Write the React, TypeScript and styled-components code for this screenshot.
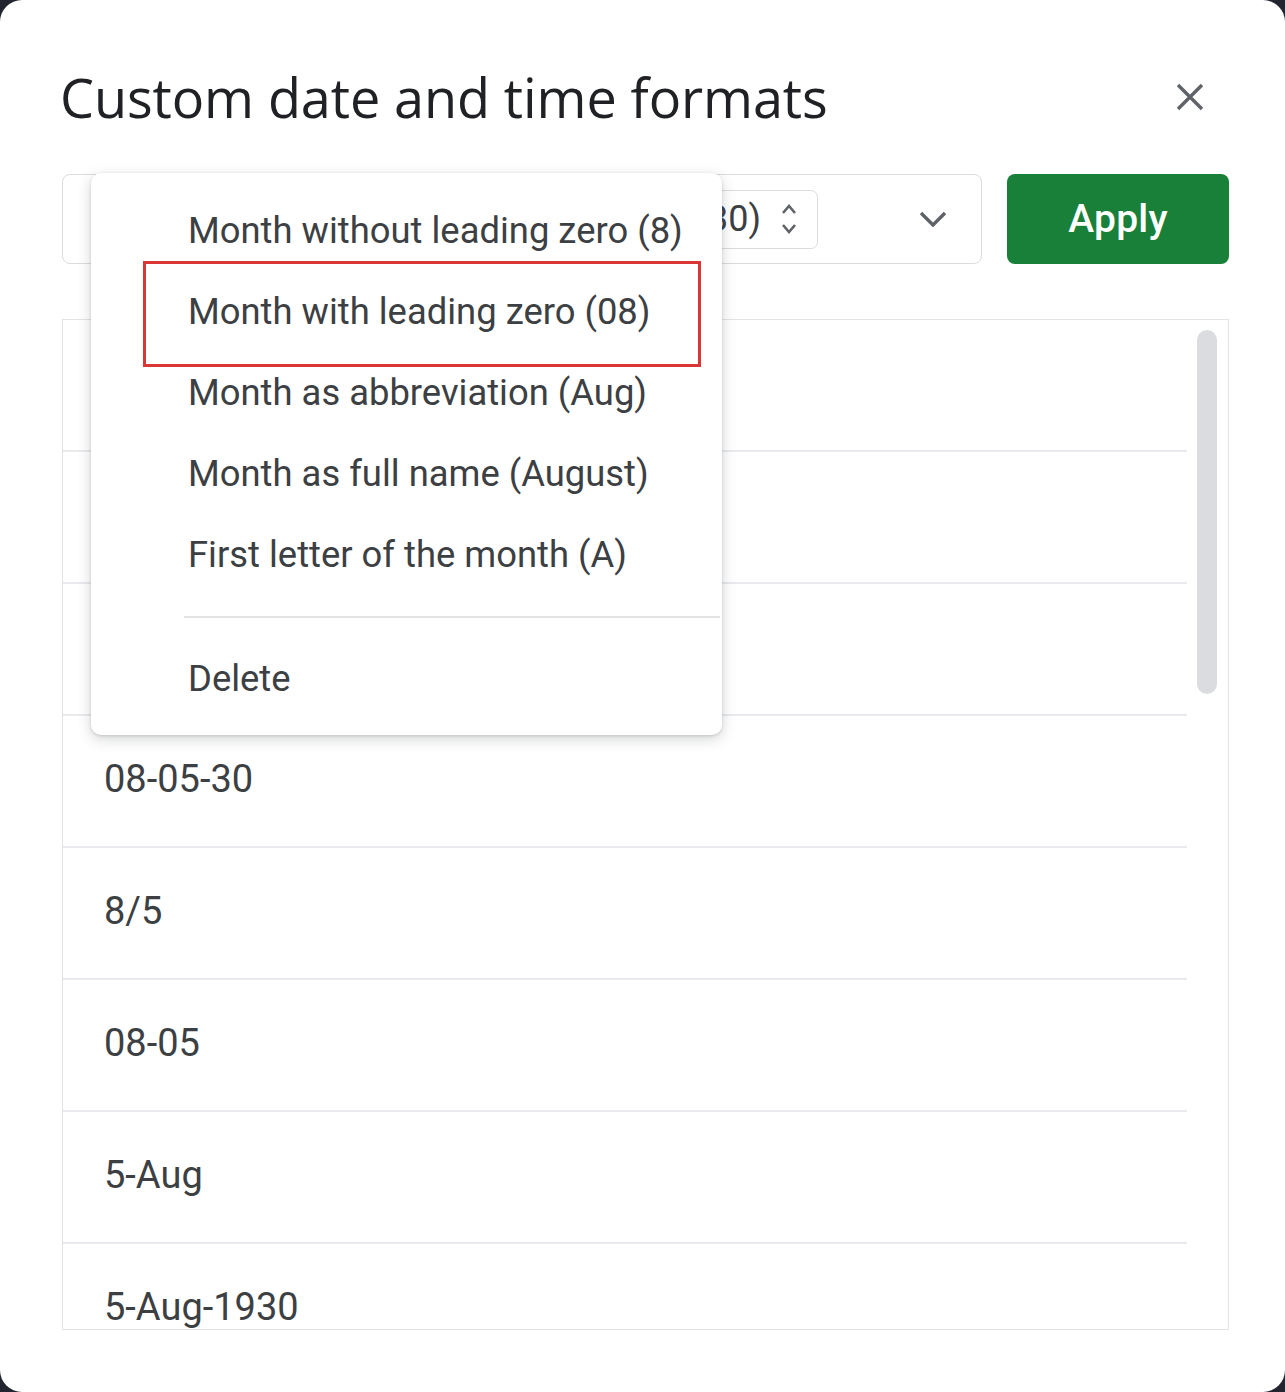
import React from "react";
import styled, { createGlobalStyle } from "styled-components";

const GlobalStyle = createGlobalStyle`
  html, body {
    margin: 0;
    padding: 0;
    background: #22252f;
  }
  * {
    box-sizing: border-box;
  }
`;

const Dialog = styled.div`
  position: relative;
  width: 1285px;
  height: 1392px;
  background: #ffffff;
  border-radius: 22px;
  padding: 57px 56px 0 62px;
  overflow: hidden;
  font-family: Roboto, "Liberation Sans", sans-serif;
`;

const Header = styled.div`
  display: flex;
  align-items: center;
  justify-content: space-between;
  height: 80px;
  margin-bottom: 37px;
`;

const Title = styled.h1`
  margin: 0 0 0 -2px;
  font-family: "Open Sans", "Liberation Sans", sans-serif;
  font-size: 54px;
  font-weight: 400;
  line-height: 80px;
  color: #202124;
  letter-spacing: -0.1px;
`;

const CloseButton = styled.button`
  display: flex;
  align-items: center;
  justify-content: center;
  width: 48px;
  height: 48px;
  margin-right: 15px;
  padding: 0;
  border: none;
  background: none;
`;

const Toolbar = styled.div`
  display: flex;
  gap: 25px;
  height: 90px;
`;

const FormatInput = styled.div`
  flex: 1;
  display: flex;
  align-items: center;
  padding: 0 34px 0 16px;
  border: 1.5px solid #dadce0;
  border-radius: 8px;
`;

const Chip = styled.div`
  display: flex;
  align-items: center;
  gap: 20px;
  height: 59px;
  margin-left: auto;
  margin-right: 101px;
  padding: 0 20px 0 16px;
  border: 1.5px solid #dadce0;
  border-radius: 7px;
  font-size: 36px;
  color: #3c4043;
`;

const ApplyButton = styled.button`
  width: 222px;
  border: none;
  border-radius: 8px;
  background: #188038;
  color: #ffffff;
  font-family: Roboto, "Liberation Sans", sans-serif;
  font-size: 39px;
  font-weight: 500;
  letter-spacing: 0.2px;
`;

const List = styled.div`
  display: flex;
  height: 1011px;
  margin-top: 55px;
  border: 1.5px solid #e3e3e3;
  overflow: hidden;
`;

const Rows = styled.div`
  flex: 1;
`;

const Row = styled.div`
  display: flex;
  align-items: center;
  height: 132px;
  padding: 0 0 4px 41px;
  border-bottom: 2px solid #e8eaed;
  font-size: 38px;
  color: #3c4043;
`;

const ScrollTrack = styled.div`
  width: 41px;
  padding: 10px 0 0 10px;
`;

const ScrollThumb = styled.div`
  width: 20px;
  height: 364px;
  border-radius: 10px;
  background: #dadce0;
`;

const Menu = styled.div`
  position: absolute;
  left: 91px;
  top: 173px;
  width: 631px;
  padding: 17px 0 16px;
  background: #ffffff;
  border-radius: 10px;
  box-shadow: 0 4px 14px rgba(60, 64, 67, 0.22), 0 1px 3px rgba(60, 64, 67, 0.18);
`;

const MenuItem = styled.div`
  display: flex;
  align-items: center;
  height: 81px;
  padding-left: 97px;
  font-size: 36.4px;
  color: #3c4043;
  white-space: nowrap;
`;

const Separator = styled.div`
  height: 2px;
  margin: 21px 2px 20px 93px;
  background: #e3e3e6;
`;

const Highlight = styled.div`
  position: absolute;
  left: 52px;
  top: 88px;
  width: 558px;
  height: 106px;
  border: 3px solid #d93636;
`;

const CloseIcon = () => (
  <svg width="30" height="30" viewBox="0 0 30 30">
    <path d="M3 3 L27 27 M27 3 L3 27" stroke="#5f6368" strokeWidth="3.4" fill="none" />
  </svg>
);

const ChevronDown = () => (
  <svg width="28" height="16" viewBox="0 0 28 16">
    <path d="M2 2 L14 14 L26 2" stroke="#5f6368" strokeWidth="3.4" fill="none" />
  </svg>
);

const UpDown = () => (
  <svg width="16" height="32" viewBox="0 0 16 32">
    <path d="M2 10 L8 3 L14 10 M2 22 L8 29 L14 22" stroke="#5f6368" strokeWidth="2.6" fill="none" />
  </svg>
);

const rows = ["8/5/1930", "8/5/30", "8-5-30", "08-05-30", "8/5", "08-05", "5-Aug", "5-Aug-1930"];

const monthOptions = [
  "Month without leading zero (8)",
  "Month with leading zero (08)",
  "Month as abbreviation (Aug)",
  "Month as full name (August)",
  "First letter of the month (A)",
];

export default function App() {
  return (
    <>
      <GlobalStyle />
      <Dialog>
        <Header>
          <Title>Custom date and time formats</Title>
          <CloseButton aria-label="Close">
            <CloseIcon />
          </CloseButton>
        </Header>
        <Toolbar>
          <FormatInput>
            <Chip>
              <span>Year (30)</span>
              <UpDown />
            </Chip>
            <ChevronDown />
          </FormatInput>
          <ApplyButton>Apply</ApplyButton>
        </Toolbar>
        <List>
          <Rows>
            {rows.map((r) => (
              <Row key={r}>{r}</Row>
            ))}
          </Rows>
          <ScrollTrack>
            <ScrollThumb />
          </ScrollTrack>
        </List>
        <Menu>
          {monthOptions.map((o) => (
            <MenuItem key={o}>{o}</MenuItem>
          ))}
          <Separator />
          <MenuItem>Delete</MenuItem>
          <Highlight />
        </Menu>
      </Dialog>
    </>
  );
}
